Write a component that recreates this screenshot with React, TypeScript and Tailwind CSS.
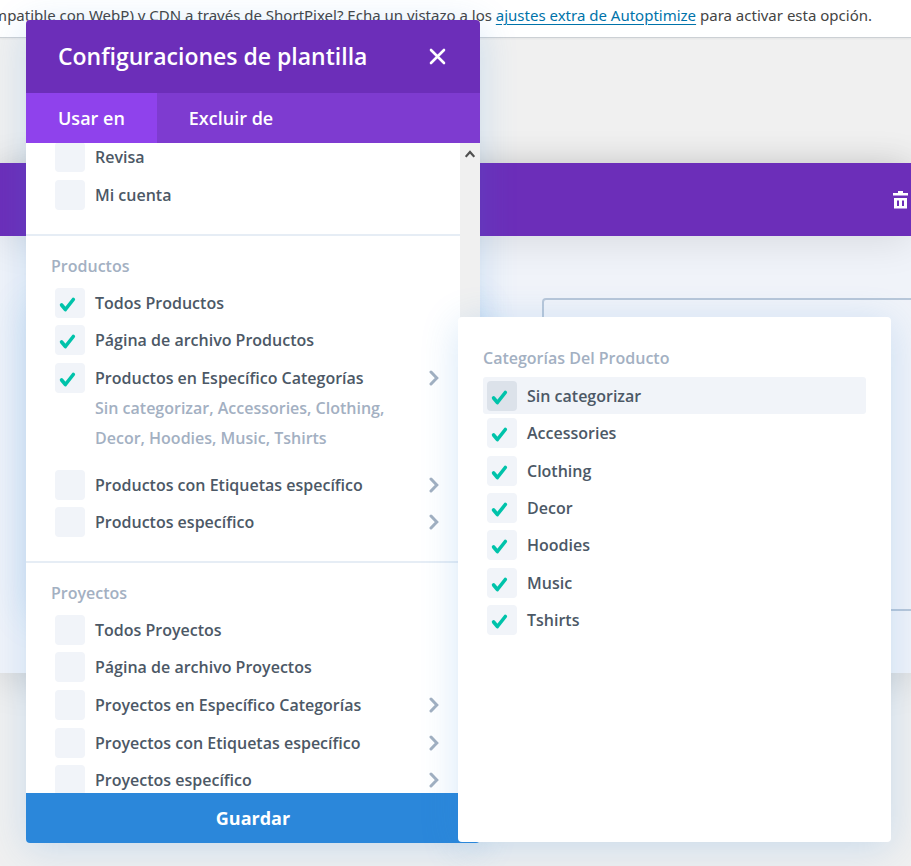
import React, { useState } from 'react';

type Option = {
  label: string;
  checked?: boolean;
  more?: boolean;
  active?: boolean;
};

const pageOptions: Option[] = [{ label: 'Revisa' }, { label: 'Mi cuenta' }];

const productOptions: Option[] = [
  { label: 'Todos Productos', checked: true },
  { label: 'Página de archivo Productos', checked: true },
  { label: 'Productos en Específico Categorías', checked: true, more: true },
];

const productExtraOptions: Option[] = [
  { label: 'Productos con Etiquetas específico', more: true },
  { label: 'Productos específico', more: true },
];

const projectOptions: Option[] = [
  { label: 'Todos Proyectos' },
  { label: 'Página de archivo Proyectos' },
  { label: 'Proyectos en Específico Categorías', more: true },
  { label: 'Proyectos con Etiquetas específico', more: true },
  { label: 'Proyectos específico', more: true },
];

const categoryOptions: Option[] = [
  { label: 'Sin categorizar', checked: true, active: true },
  { label: 'Accessories', checked: true },
  { label: 'Clothing', checked: true },
  { label: 'Decor', checked: true },
  { label: 'Hoodies', checked: true },
  { label: 'Music', checked: true },
  { label: 'Tshirts', checked: true },
];

const OptionRow: React.FC<{ option: Option }> = ({ option }) => {
  const [checked, setChecked] = useState(!!option.checked);

  return (
    <li className={`flex items-center rounded-[3px] pl-1 ${option.active ? 'bg-[#f1f4f9]' : ''}`}>
      <label className="flex flex-1 items-center gap-[10px] whitespace-nowrap">
        <span className="grid size-[30px] shrink-0">
          <input
            type="checkbox"
            checked={checked}
            onChange={(e) => setChecked(e.target.checked)}
            className={`peer [grid-area:1/1] appearance-none rounded-[4px] ${option.active ? 'bg-[#dce2ea]' : 'bg-[#f1f4f9]'}`}
          />
          <svg
            viewBox="0 0 30 30"
            className="pointer-events-none invisible [grid-area:1/1] peer-checked:visible"
            fill="none"
            stroke="#00c3aa"
            strokeWidth="3.6"
            strokeLinecap="round"
            strokeLinejoin="round"
            aria-hidden="true"
          >
            <path d="M6.6 17 L10.4 21.5 L18.3 11.5" />
          </svg>
        </span>
        {option.label}
      </label>
      {option.more && (
        <button type="button" aria-label={`Ver ${option.label}`}>
          <svg width="10" height="16" viewBox="0 0 10 16" fill="none" stroke="#a2b0c1" strokeWidth="3" strokeLinecap="round">
            <path d="M2 2 L7.8 8 L2 14" />
          </svg>
        </button>
      )}
    </li>
  );
};

const OptionList: React.FC<{ options: Option[]; className: string }> = ({ options, className }) => (
  <ul className={`grid auto-rows-fr ${className}`}>
    {options.map((option) => (
      <OptionRow key={option.label} option={option} />
    ))}
  </ul>
);

const GroupTitle: React.FC<{ children: React.ReactNode }> = ({ children }) => (
  <h3 className="flex h-9 items-center text-[#a3b0c2]">{children}</h3>
);

const Backdrop: React.FC = () => (
  <>
    <div className="flex h-[38px] justify-end overflow-hidden border-b border-[#ccd0d4] bg-white pr-[39px] font-['Noto_Sans',sans-serif] text-[15px] leading-[30px] whitespace-nowrap text-[#444] shadow-xs">
      <p>
        (compatible con WebP) y CDN a través de ShortPixel? Echa un vistazo a los{' '}
        <a href="#autoptimize" className="text-[#0073aa] underline underline-offset-3">
          ajustes extra de Autoptimize
        </a>{' '}
        para activar esta opción.
      </p>
    </div>

    <div className="mt-[125px] bg-[#f0f3f9] shadow-[0_6px_38px_rgba(0,0,0,0.15)]">
      <div className="flex h-[73px] items-center justify-end bg-[#6c2eb9] pr-[2px] shadow-[0_6px_38px_rgba(0,0,0,0.1)]">
        <button type="button" aria-label="Eliminar">
          <svg width="17" height="20" viewBox="0 0 17 20" fill="#fff">
            <path fillRule="evenodd" d="M6 1h5v2h5v2.5H1V3h5zM2 8h13v10.5H2zM5 10.5v5.5h2v-5.5zM10 10.5v5.5h2v-5.5z" />
          </svg>
        </button>
      </div>
      <div className="flex gap-[62px] overflow-hidden py-[62px] pl-[26px]">
        <div className="h-[313px] w-[454px] shrink-0 rounded-[4px] shadow-[0_6px_38px_rgba(43,135,218,0.15)]" />
        <div className="-mr-2 h-[313px] flex-1 rounded-[4px] border-2 border-[#b8c7d9]" />
      </div>
    </div>
  </>
);

const CategoryPanel: React.FC = () => (
  <section className="absolute top-[317px] bottom-6 left-[458px] w-[433px] rounded-[4px] bg-white px-[25px] pt-[23px] shadow-[0_6px_38px_rgba(43,135,218,0.2)]">
    <GroupTitle>Categorías Del Producto</GroupTitle>
    <OptionList options={categoryOptions} className="mt-px h-[262px]" />
  </section>
);

const TemplateSettings: React.FC = () => (
  <div
    role="dialog"
    aria-labelledby="settings-title"
    className="absolute top-5 bottom-[23px] left-[26px] flex w-[454px] flex-col overflow-hidden rounded-[4px] bg-white"
  >
    <header className="flex h-[73px] shrink-0 items-center justify-between bg-[#6c2eb9] pr-[34px] pl-8 text-white">
      <h2 id="settings-title" className="text-[23px] font-semibold">
        Configuraciones de plantilla
      </h2>
      <button type="button" aria-label="Cerrar">
        <svg width="17" height="17" viewBox="0 0 17 17" fill="none" stroke="#fff" strokeWidth="2.6" strokeLinecap="round">
          <path d="M2 2 L15 15 M15 2 L2 15" />
        </svg>
      </button>
    </header>

    <nav className="flex h-[50px] shrink-0 bg-[#7e3bd0] text-[18px] text-white">
      <button type="button" className="bg-[#8f42ec] px-8 font-semibold">
        Usar en
      </button>
      <button type="button" className="px-8 font-semibold">
        Excluir de
      </button>
    </nav>

    <div className="flex min-h-0 flex-1">
      <div className="min-w-0 flex-1 overflow-hidden">
        <section className="-mt-[5px] border-b-2 border-[#e6edf5] px-[25px] pb-5">
          <OptionList options={pageOptions} className="h-[76px]" />
        </section>

        <section className="border-b-2 border-[#e6edf5] pt-3 pr-[21px] pb-5 pl-[25px]">
          <GroupTitle>Productos</GroupTitle>
          <OptionList options={productOptions} className="h-[113px]" />
          <p className="-mt-1 pr-8 pl-11 leading-[30px] text-[#a3b0c2]">
            Sin categorizar, Accessories, Clothing, Decor, Hoodies, Music, Tshirts
          </p>
          <OptionList options={productExtraOptions} className="mt-[13px] h-[75px]" />
        </section>

        <section className="pt-3 pr-[21px] pl-[25px]">
          <GroupTitle>Proyectos</GroupTitle>
          <OptionList options={projectOptions} className="h-[188px]" />
        </section>
      </div>

      <div className="flex w-5 shrink-0 justify-center bg-[#f0f0f0] pt-[7px]" aria-hidden="true">
        <svg width="10" height="8" viewBox="0 0 10 8" fill="none" stroke="#505050" strokeWidth="2.2">
          <path d="M0.7 6.8 L5 2 L9.3 6.8" />
        </svg>
      </div>
    </div>

    <button type="button" className="h-[50px] shrink-0 bg-[#2b87da] text-[18px] font-bold text-white">
      Guardar
    </button>
  </div>
);

const App: React.FC = () => {
  return (
    <main className="relative min-h-screen overflow-hidden bg-[#f0f0f0] font-['Open_Sans',sans-serif] text-base font-semibold text-[#4c5866]">
      <div className="font-normal">
        <Backdrop />
      </div>
      <div className="pointer-events-none absolute top-5 bottom-[23px] left-[26px] w-[454px] rounded-[4px] shadow-[0_6px_38px_rgba(43,135,218,0.2)]" />
      <TemplateSettings />
      <CategoryPanel />
    </main>
  );
};

export default App;
